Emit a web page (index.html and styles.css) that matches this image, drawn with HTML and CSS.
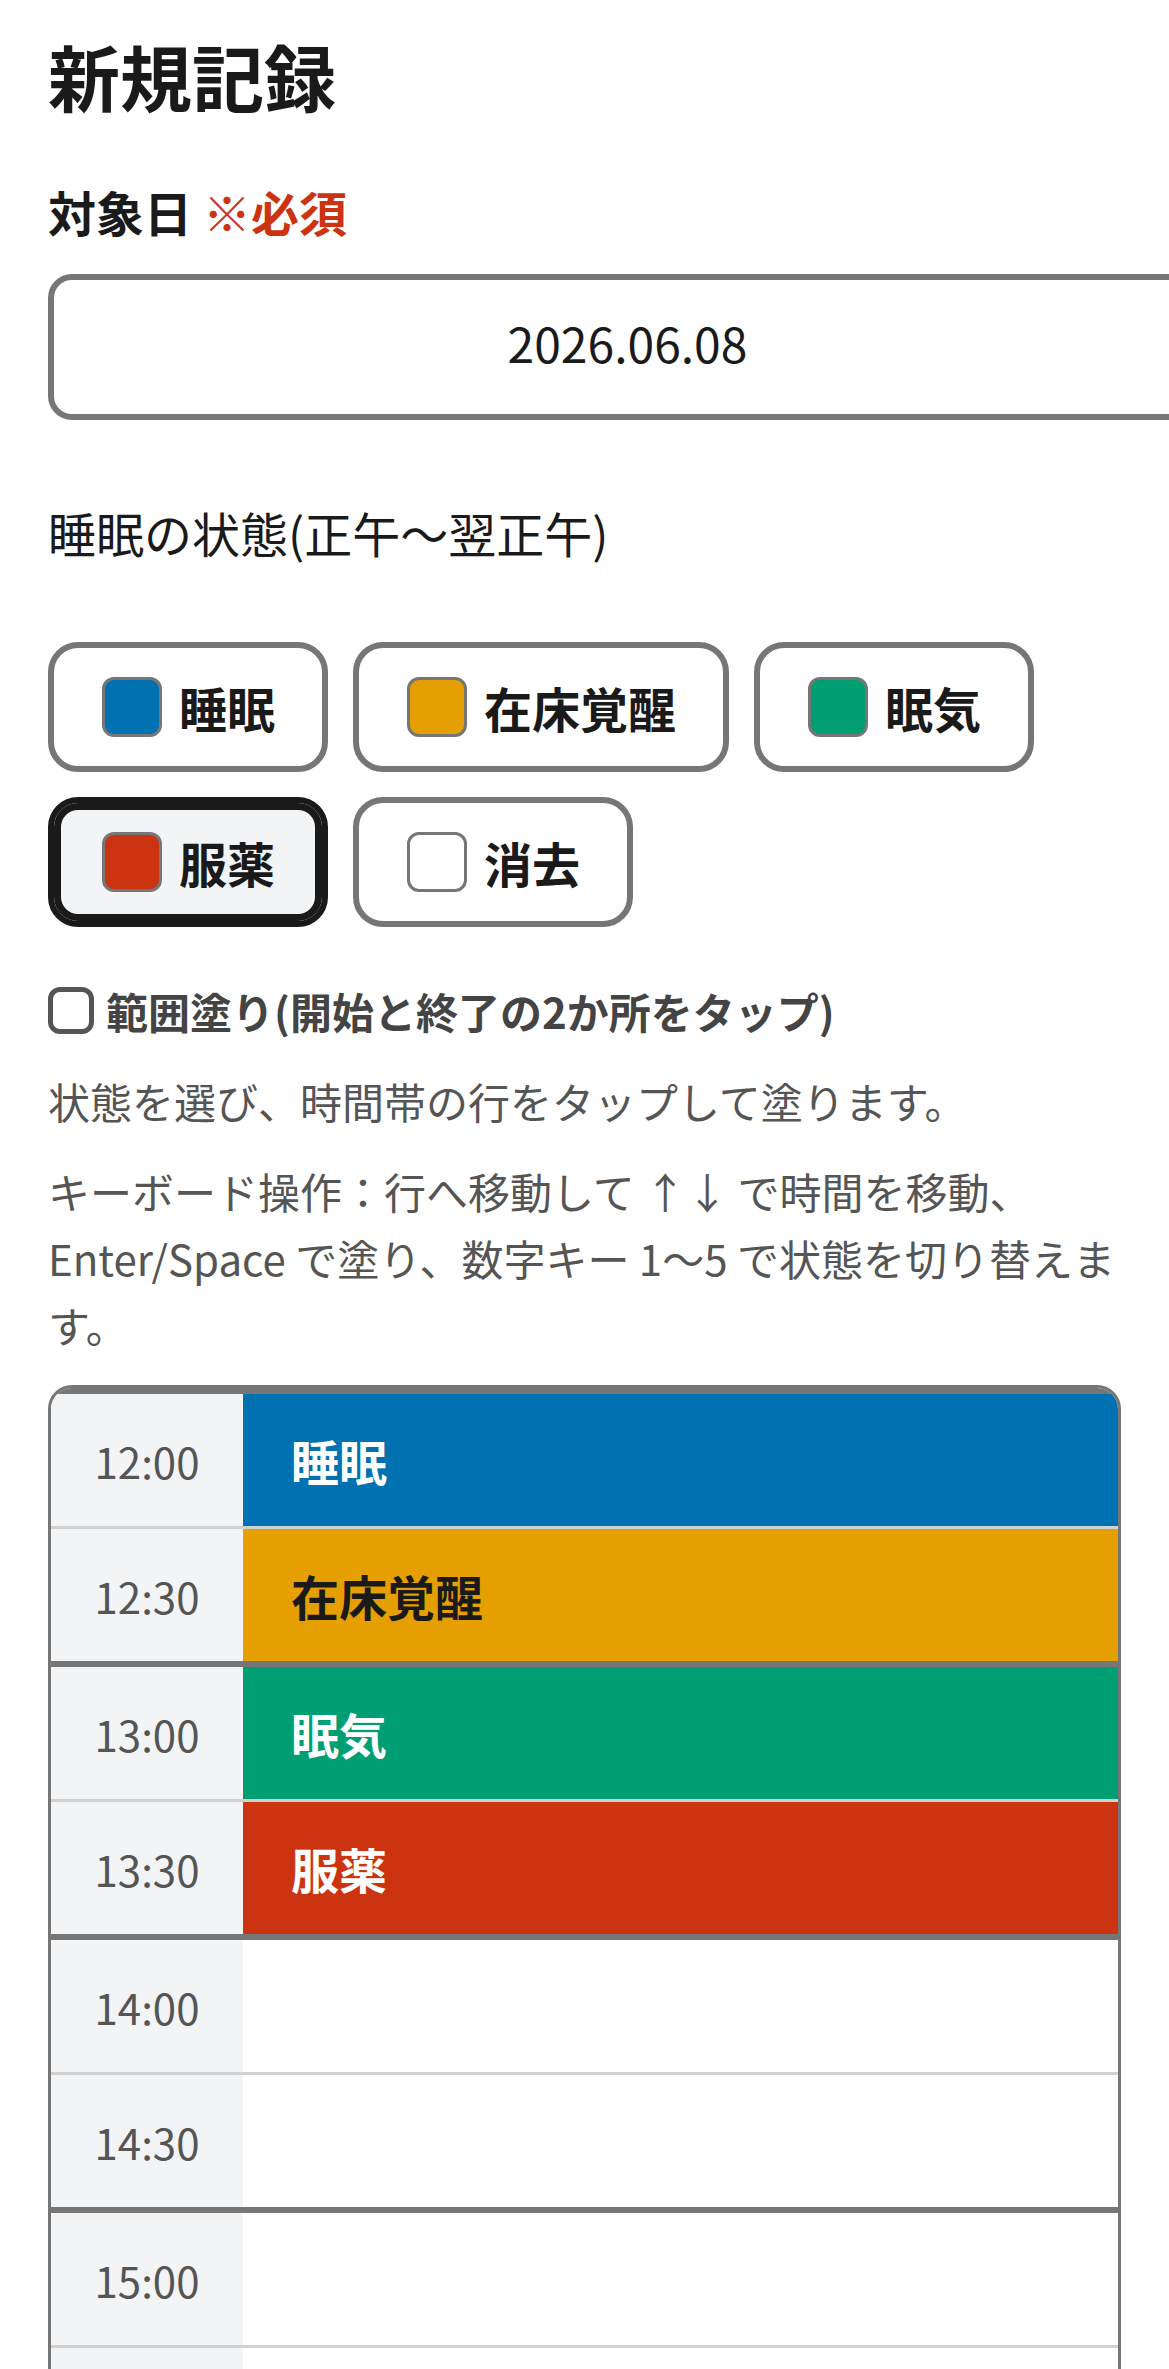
FILE: index.html
```html
<!DOCTYPE html>
<html lang="ja">
<head>
<meta charset="utf-8">
<title>新規記録</title>
<link rel="stylesheet" href="styles.css">
</head>
<body>
<main class="page">
  <h1 class="title">新規記録</h1>
  <label class="field-label" for="date">対象日 <span class="required">※必須</span></label>
  <input id="date" class="date-input" type="text" value="2026.06.08" readonly>
  <p class="section-label">睡眠の状態(正午〜翌正午)</p>
  <div class="states">
    <button class="state" type="button"><span class="swatch swatch-sleep"></span><span class="state-name">睡眠</span></button>
    <button class="state" type="button"><span class="swatch swatch-awake"></span><span class="state-name">在床覚醒</span></button>
    <button class="state" type="button"><span class="swatch swatch-drowsy"></span><span class="state-name">眠気</span></button>
    <button class="state state-selected" type="button"><span class="swatch swatch-med"></span><span class="state-name">服薬</span></button>
    <button class="state" type="button"><span class="swatch swatch-clear"></span><span class="state-name">消去</span></button>
  </div>
  <label class="range"><span class="range-box"></span><span class="range-text">範囲塗り(開始と終了の2か所をタップ)</span></label>
  <p class="hint">状態を選び、時間帯の行をタップして塗ります。</p>
  <p class="hint hint-keys">キーボード操作：行へ移動して ↑↓ で時間を移動、Enter/Space で塗り、数字キー 1〜5 で状態を切り替えます。</p>
  <div class="grid">
    <div class="row row-hour"><div class="time">12:00</div><div class="cell cell-sleep">睡眠</div></div>
    <div class="row"><div class="time">12:30</div><div class="cell cell-awake">在床覚醒</div></div>
    <div class="row row-hour"><div class="time">13:00</div><div class="cell cell-drowsy">眠気</div></div>
    <div class="row"><div class="time">13:30</div><div class="cell cell-med">服薬</div></div>
    <div class="row row-hour"><div class="time">14:00</div><div class="cell"></div></div>
    <div class="row"><div class="time">14:30</div><div class="cell"></div></div>
    <div class="row row-hour"><div class="time">15:00</div><div class="cell"></div></div>
    <div class="row"><div class="time">15:30</div><div class="cell"></div></div>
    <div class="row row-hour"><div class="time">16:00</div><div class="cell"></div></div>
    <div class="row"><div class="time">16:30</div><div class="cell"></div></div>
    <div class="row row-hour"><div class="time">17:00</div><div class="cell"></div></div>
    <div class="row"><div class="time">17:30</div><div class="cell"></div></div>
  </div>
</main>
</body>
</html>
```

FILE: styles.css
```css
html, body {
  margin: 0;
  padding: 0;
  background: #ffffff;
}
body {
  overflow-x: hidden;
  font-family: "Noto Sans CJK JP", "Noto Sans", sans-serif;
  color: #1a1a1a;
}
.page {
  padding: 32px 48px 0;
  display: flex;
  flex-direction: column;
  align-items: flex-start;
}
.title {
  margin: 0;
  font-size: 72px;
  line-height: 86px;
  font-weight: 700;
}
.field-label {
  margin-top: 57px;
  font-size: 48px;
  line-height: 72px;
  font-weight: 700;
}
.required {
  color: #cc3311;
}
.date-input {
  margin: 27px 0 0;
  width: 100%;
  box-sizing: content-box;
  height: 124px;
  padding: 0 37px 10px;
  border: 6px solid #767676;
  border-radius: 24px;
  background: #ffffff;
  font-family: "Noto Sans CJK JP", "Noto Sans", sans-serif;
  font-size: 48px;
  color: #1a1a1a;
  text-align: center;
  outline: none;
}
.section-label {
  margin: 76px 0 0;
  font-size: 48px;
  line-height: 72px;
}
.states {
  margin-top: 74px;
  display: flex;
  flex-wrap: wrap;
  gap: 25px 25px;
}
.state {
  display: flex;
  align-items: center;
  gap: 17px;
  height: 130px;
  box-sizing: border-box;
  padding: 0 47px 0 48px;
  border: 6px solid #767676;
  border-radius: 30px;
  background: #ffffff;
  font-family: "Noto Sans CJK JP", "Noto Sans", sans-serif;
  font-size: 48px;
  font-weight: 700;
  color: #1a1a1a;
  cursor: pointer;
}
.state-selected {
  border-color: #1a1a1a;
  box-shadow: inset 0 0 0 7px #1a1a1a;
  background: #f3f4f6;
}
.state-name {
  line-height: 72px;
}
.swatch {
  width: 60px;
  height: 60px;
  box-sizing: border-box;
  border: 3px solid #767676;
  border-radius: 12px;
  flex: none;
}
.swatch-sleep { background: #0072b2; }
.swatch-awake { background: #e69f00; }
.swatch-drowsy { background: #009e73; }
.swatch-med { background: #cc3311; }
.swatch-clear { background: #ffffff; }
.range {
  margin-top: 52px;
  display: flex;
  align-items: center;
  gap: 12px;
  height: 63px;
}
.range-box {
  width: 46px;
  height: 47px;
  box-sizing: border-box;
  border: 5px solid #555555;
  border-radius: 12px;
  background: #ffffff;
  flex: none;
}
.range-text {
  font-size: 42px;
  line-height: 63px;
  font-weight: 700;
  color: #444444;
}
.hint {
  margin: 25px 0 0;
  font-size: 42px;
  line-height: 67px;
  color: #555555;
}
.hint-keys {
  margin-top: 23px;
}
.grid {
  margin-top: 27px;
  align-self: stretch;
  border: 3px solid #767676;
  border-radius: 24px;
  overflow: hidden;
}
.row {
  display: flex;
  height: 135px;
  box-sizing: border-box;
  border-top: 3px solid #d1d1d1;
}
.row-hour {
  height: 138px;
  border-top: 6px solid #767676;
}
.time {
  width: 192px;
  flex: none;
  display: flex;
  align-items: center;
  justify-content: center;
  background: #f3f4f6;
  color: #555555;
  font-size: 42px;
}
.cell {
  flex: 1;
  display: flex;
  align-items: center;
  padding-left: 48px;
  font-size: 48px;
  font-weight: 700;
  background: #ffffff;
}
.cell-sleep { background: #0072b2; color: #ffffff; }
.cell-awake { background: #e69f00; color: #1a1a1a; }
.cell-drowsy { background: #009e73; color: #ffffff; }
.cell-med { background: #cc3311; color: #ffffff; }
```
